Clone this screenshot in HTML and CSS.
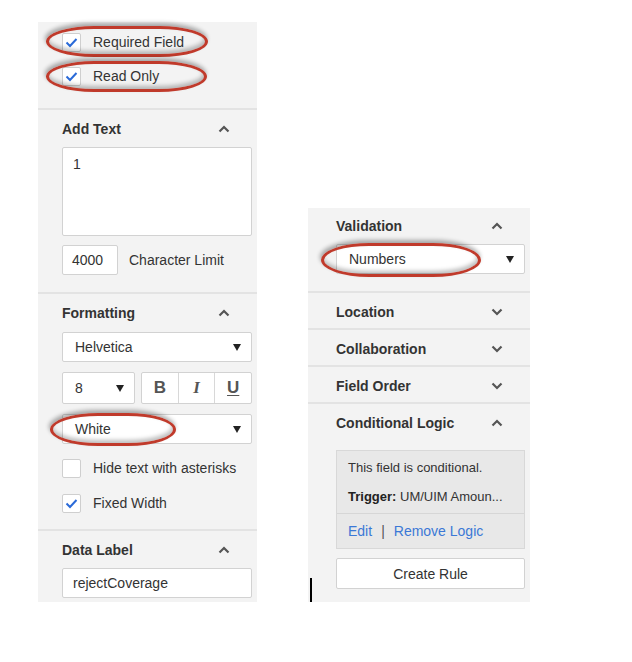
FILE: index.html
```html
<!DOCTYPE html>
<html>
<head>
<meta charset="utf-8">
<link rel="stylesheet" href="styles.css">
</head>
<body>
<div class="page">
  <div class="panel panel-left">
    <div class="sec sec-checks">
      <label class="cbrow">
        <span class="cb"><svg viewBox="0 0 19 19" width="19" height="19"><path d="M4.5 9.5 L8 13 L14.5 6" fill="none" stroke="#2a6ad8" stroke-width="2"/></svg></span>
        <span>Required Field</span>
      </label>
      <label class="cbrow">
        <span class="cb"><svg viewBox="0 0 19 19" width="19" height="19"><path d="M4.5 9.5 L8 13 L14.5 6" fill="none" stroke="#2a6ad8" stroke-width="2"/></svg></span>
        <span>Read Only</span>
      </label>
    </div>

    <div class="sec">
      <div class="hdr"><span>Add Text</span><svg class="chev" viewBox="0 0 12 8" width="12" height="8"><path d="M1.5 6.5 L6 2 L10.5 6.5" fill="none" stroke="#555" stroke-width="2.2"/></svg></div>
      <div class="textarea">1</div>
      <div class="limit-row">
        <div class="input small">4000</div>
        <span>Character Limit</span>
      </div>
    </div>

    <div class="sec sec-format">
      <div class="hdr"><span>Formatting</span><svg class="chev" viewBox="0 0 12 8" width="12" height="8"><path d="M1.5 6.5 L6 2 L10.5 6.5" fill="none" stroke="#555" stroke-width="2.2"/></svg></div>
      <div class="select"><span>Helvetica</span><i class="tri"></i></div>
      <div class="fmt-row">
        <div class="select size"><span>8</span><i class="tri"></i></div>
        <div class="biu">
          <span class="b">B</span>
          <span class="it">I</span>
          <span class="u">U</span>
        </div>
      </div>
      <div class="select"><span>White</span><i class="tri"></i></div>
      <div class="checks2">
        <label class="cbrow">
          <span class="cb"></span>
          <span>Hide text with asterisks</span>
        </label>
        <label class="cbrow">
          <span class="cb"><svg viewBox="0 0 19 19" width="19" height="19"><path d="M4.5 9.5 L8 13 L14.5 6" fill="none" stroke="#2a6ad8" stroke-width="2"/></svg></span>
          <span>Fixed Width</span>
        </label>
      </div>
    </div>

    <div class="sec sec-last">
      <div class="hdr"><span>Data Label</span><svg class="chev" viewBox="0 0 12 8" width="12" height="8"><path d="M1.5 6.5 L6 2 L10.5 6.5" fill="none" stroke="#555" stroke-width="2.2"/></svg></div>
      <div class="input">rejectCoverage</div>
    </div>
  </div>

  <div class="panel panel-right">
    <div class="sec sec-valid">
      <div class="hdr"><span>Validation</span><svg class="chev" viewBox="0 0 12 8" width="12" height="8"><path d="M1.5 6.5 L6 2 L10.5 6.5" fill="none" stroke="#555" stroke-width="2.2"/></svg></div>
      <div class="select numbers"><span>Numbers</span><i class="tri"></i></div>
    </div>
    <div class="sec collapsed">
      <div class="hdr"><span>Location</span><svg class="chev" viewBox="0 0 12 8" width="12" height="8"><path d="M1.5 1.5 L6 6 L10.5 1.5" fill="none" stroke="#555" stroke-width="2.2"/></svg></div>
    </div>
    <div class="sec collapsed">
      <div class="hdr"><span>Collaboration</span><svg class="chev" viewBox="0 0 12 8" width="12" height="8"><path d="M1.5 1.5 L6 6 L10.5 1.5" fill="none" stroke="#555" stroke-width="2.2"/></svg></div>
    </div>
    <div class="sec collapsed">
      <div class="hdr"><span>Field Order</span><svg class="chev" viewBox="0 0 12 8" width="12" height="8"><path d="M1.5 1.5 L6 6 L10.5 1.5" fill="none" stroke="#555" stroke-width="2.2"/></svg></div>
    </div>
    <div class="sec sec-last sec-cond">
      <div class="hdr"><span>Conditional Logic</span><svg class="chev" viewBox="0 0 12 8" width="12" height="8"><path d="M1.5 6.5 L6 2 L10.5 6.5" fill="none" stroke="#555" stroke-width="2.2"/></svg></div>
      <div class="condbox">
        <div class="cond-info">
          <div>This field is conditional.</div>
          <div class="trigger"><b>Trigger:</b> UM/UIM Amoun...</div>
        </div>
        <div class="cond-links">
          <a>Edit</a><span class="pipe">|</span><a>Remove Logic</a>
        </div>
      </div>
      <div class="btn">Create Rule</div>
    </div>
  </div>

  <div class="mark m1"></div>
  <div class="mark m2"></div>
  <div class="mark m3"></div>
  <div class="mark m4"></div>
  <div class="cursor"></div>
</div>
</body>
</html>
```

FILE: styles.css
```css
* { box-sizing: border-box; }
html, body { margin: 0; padding: 0; background: #fff; }
body {
  font-family: "Liberation Sans", Arial, sans-serif;
  font-size: 14px;
  color: #333;
}
.page {
  position: relative;
  width: 632px;
  height: 662px;
  display: flex;
  align-items: flex-end;
  gap: 51px;
  padding-left: 38px;
  padding-bottom: 60px;
}
.panel {
  background: #f3f3f3;
  overflow: hidden;
  flex: none;
}
.panel-left { width: 219px; height: 580px; }
.panel-right { width: 222px; height: 394px; }

.sec {
  border-bottom: 2px solid #e3e3e3;
  padding: 10px 5px 17px 24px;
}
.panel-right .sec { padding-left: 28px; }
.sec-last { border-bottom: none; }

.sec-checks {
  padding-top: 11px;
  padding-bottom: 22px;
  display: flex;
  flex-direction: column;
  gap: 15px;
}
.cbrow {
  display: flex;
  align-items: center;
  gap: 12px;
  height: 19px;
  line-height: 19px;
}
.cb {
  width: 19px;
  height: 19px;
  background: #fff;
  border: 1px solid #cfcfcf;
  border-radius: 2px;
  display: flex;
  align-items: center;
  justify-content: center;
  flex: none;
}
.cb svg { display: block; margin: -1px; }

.hdr {
  display: flex;
  align-items: center;
  justify-content: space-between;
  height: 18px;
  font-weight: bold;
  color: #333;
  margin-bottom: 9px;
  padding-right: 22px;
}
.chev { display: block; }

.textarea {
  height: 89px;
  background: #fff;
  border: 1px solid #d2d2d2;
  border-radius: 2px;
  padding: 8px 10px;
  line-height: 17px;
}
.limit-row {
  display: flex;
  align-items: center;
  gap: 11px;
  margin-top: 9px;
}
.input {
  height: 30px;
  background: #fff;
  border: 1px solid #d2d2d2;
  border-radius: 2px;
  padding: 0 10px;
  display: flex;
  align-items: center;
}
.input.small { width: 56px; padding-left: 9px; }

.sec-format { padding-bottom: 16px; }
.sec-format .hdr { margin-bottom: 10px; }
.select {
  height: 30px;
  background: #fff;
  border: 1px solid #d2d2d2;
  border-radius: 2px;
  padding: 0 10px 0 12px;
  display: flex;
  align-items: center;
  justify-content: space-between;
}
.tri {
  width: 0;
  height: 0;
  border-left: 4px solid transparent;
  border-right: 4px solid transparent;
  border-top: 7px solid #222;
}
.fmt-row {
  display: flex;
  gap: 6px;
  margin: 10px 0;
  height: 32px;
}
.select.size { width: 73px; height: 32px; }
.biu {
  flex: 1;
  display: flex;
  background: #fff;
  border: 1px solid #d2d2d2;
  border-radius: 2px;
}
.biu span {
  flex: 1;
  display: flex;
  align-items: center;
  justify-content: center;
  color: #555;
  font-size: 17px;
  font-weight: bold;
  border-left: 1px solid #d8d8d8;
}
.biu span:first-child { border-left: none; }
.biu .it {
  font-family: "Liberation Serif", "Times New Roman", serif;
  font-style: italic;
}
.biu .u { text-decoration: underline; text-underline-offset: 2px; }

.checks2 {
  margin-top: 15px;
  display: flex;
  flex-direction: column;
  gap: 16px;
}

.sec-valid { padding-top: 9px; }
.collapsed { padding-top: 10px; padding-bottom: 7px; }
.collapsed .hdr { margin-bottom: 0; }

.sec-cond .hdr { margin-bottom: 18px; }
.condbox {
  background: #e8e8e8;
  border: 1px solid #d8d8d8;
  font-size: 13px;
  color: #333;
}
.cond-info {
  padding: 9px 11px 8px;
  display: flex;
  flex-direction: column;
  gap: 13px;
  line-height: 16px;
  border-bottom: 1px solid #d6d6d6;
}
.trigger b { color: #222; }
.cond-links {
  height: 34px;
  padding: 0 11px;
  display: flex;
  align-items: center;
  font-size: 14px;
}
.cond-links a { color: #3b78d6; }
.pipe { color: #555; margin: 0 9px; }
.btn {
  margin-top: 9px;
  height: 31px;
  background: #fff;
  border: 1px solid #d2d2d2;
  border-radius: 2px;
  display: flex;
  align-items: center;
  justify-content: center;
  color: #333;
}

/* annotation ovals drawn over the screenshot */
.mark {
  position: absolute;
  border: 3px solid #c03a2b;
  border-radius: 48px / 50%;
  box-shadow: -1px -3px 4px rgba(0,0,0,0.32), inset -1px -3px 4px rgba(0,0,0,0.26);
}
.m1 { left: 46px; top: 26px; width: 162px; height: 31px; }
.m2 { left: 46px; top: 61px; width: 161px; height: 31px; }
.m3 { left: 50px; top: 413px; width: 126px; height: 33px; }
.m4 { left: 321px; top: 243px; width: 160px; height: 34px; }

.cursor {
  position: absolute;
  left: 310px;
  top: 578px;
  width: 2px;
  height: 24px;
  background: #000;
}
```
